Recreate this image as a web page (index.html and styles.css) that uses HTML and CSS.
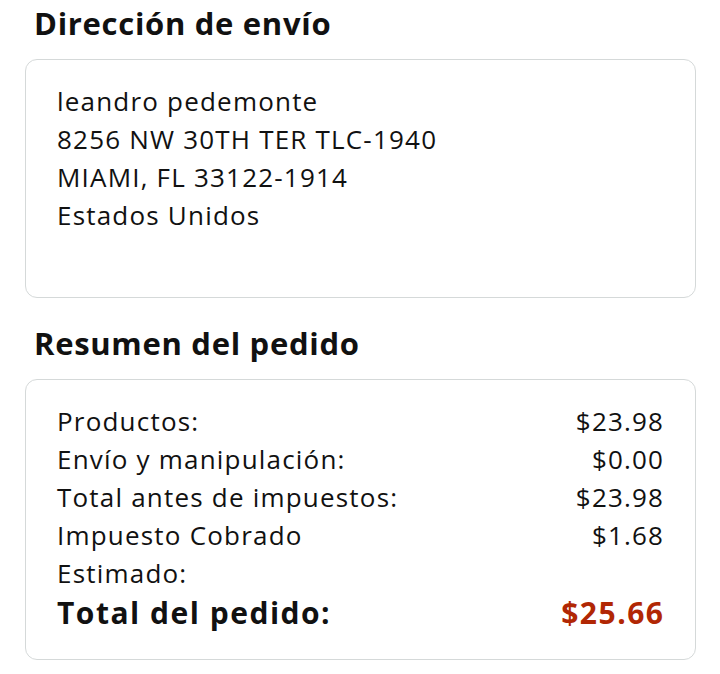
FILE: index.html
```html
<!DOCTYPE html>
<html lang="es">
<head>
<meta charset="utf-8">
<link rel="stylesheet" href="styles.css">
</head>
<body>
<div class="page">
  <h2 class="title">Dirección de envío</h2>
  <div class="card address">
    <div>leandro pedemonte</div>
    <div>8256 NW 30TH TER TLC-1940</div>
    <div>MIAMI, FL 33122-1914</div>
    <div>Estados Unidos</div>
  </div>
  <h2 class="title second">Resumen del pedido</h2>
  <div class="card summary">
    <div class="row"><span>Productos:</span><span>$23.98</span></div>
    <div class="row"><span>Envío y manipulación:</span><span>$0.00</span></div>
    <div class="row"><span>Total antes de impuestos:</span><span>$23.98</span></div>
    <div class="row"><span>Impuesto Cobrado<br>Estimado:</span><span>$1.68</span></div>
    <div class="row total"><span>Total del pedido:</span><span class="price">$25.66</span></div>
  </div>
</div>
</body>
</html>
```
FILE: styles.css
```css
* { box-sizing: border-box; }
html, body { margin: 0; padding: 0; background: #fff; }
body {
  font-family: "Open Sans", "Noto Sans", sans-serif;
  color: #111;
}
.page {
  padding: 0 24px 0 25px;
  display: flex;
  flex-direction: column;
}
.title {
  margin: 0;
  padding: 1px 0 0 9px;
  font-size: 31px;
  font-weight: 700;
  line-height: 44px;
  height: 59px;
  letter-spacing: 0.7px;
}
.title.second {
  margin-top: 23px;
  padding-top: 0;
  height: 58px;
}
.card {
  border: 1px solid #d5d9d9;
  border-radius: 12px;
  padding: 22px 32px 0 31px;
  font-size: 26px;
  line-height: 38px;
  letter-spacing: 1.2px;
}
.address { height: 239px; }
.summary { height: 281px; }
.row {
  display: flex;
  justify-content: space-between;
  align-items: flex-start;
}
.row span:last-child { margin-right: -1.2px; }
.total {
  font-weight: 700;
  font-size: 30px;
  line-height: 42px;
  letter-spacing: 1.5px;
}
.total span:last-child { margin-right: -1.5px; }
.price { color: #b12704; }
```
